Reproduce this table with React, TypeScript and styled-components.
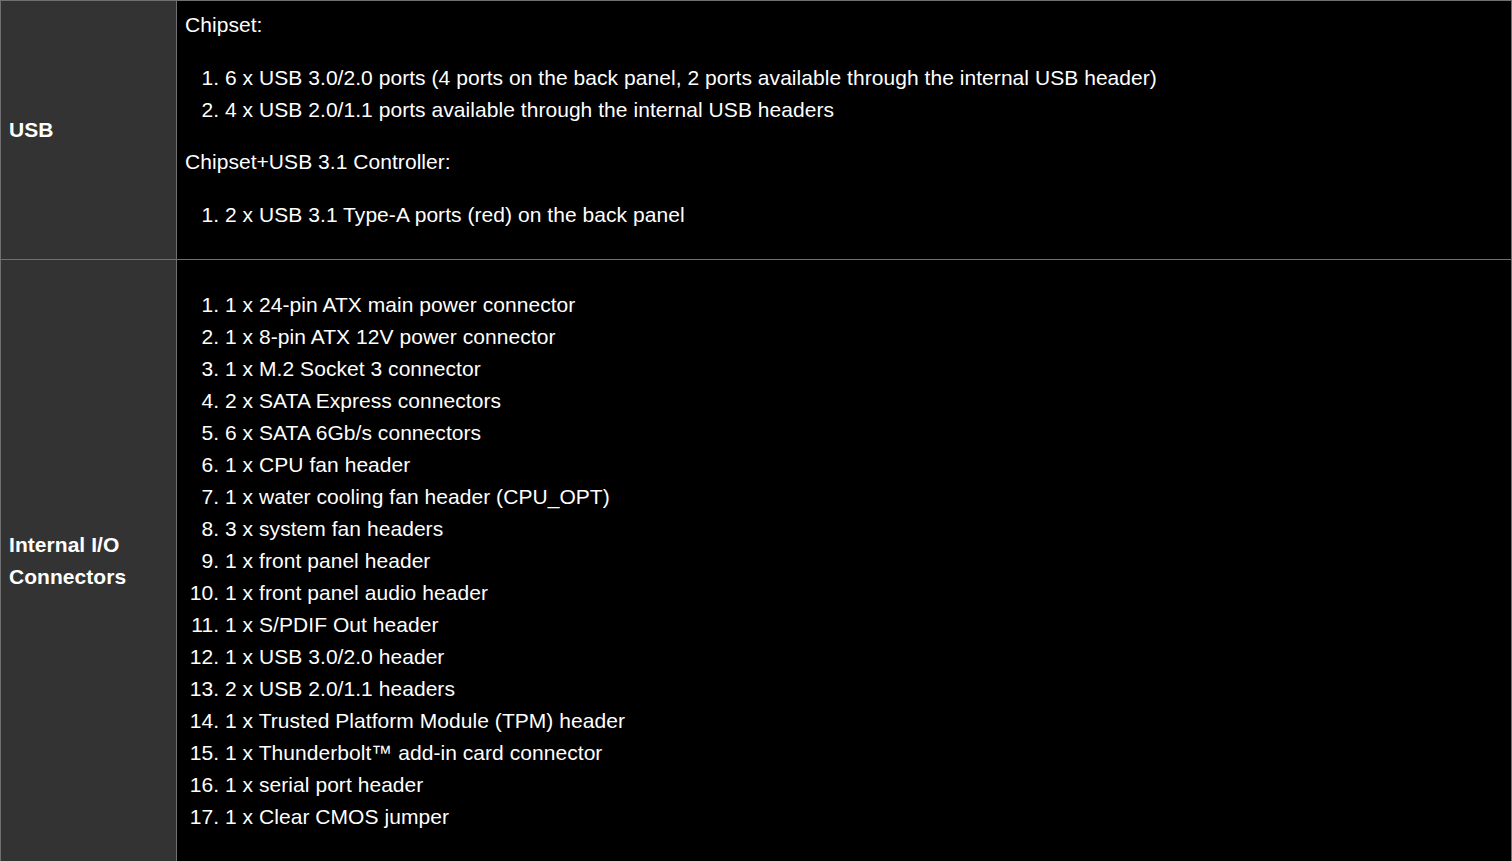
import React from "react";
import styled, { createGlobalStyle } from "styled-components";

const Global = createGlobalStyle`
  html, body { margin: 0; padding: 0; background: #000; }
  body { font-family: "Liberation Sans", Arial, sans-serif; color: #fff; }
`;

const Table = styled.table`
  width: 1512px;
  border-collapse: collapse;
  font-size: 21px;
  line-height: 32px;
  letter-spacing: 0.05px;
`;

const LabelCell = styled.th`
  width: 159px;
  background: #333;
  border: 1px solid #707070;
  padding: 0 8px;
  text-align: left;
  vertical-align: middle;
  font-weight: bold;
  color: #fff;
`;

const ContentCell = styled.td`
  background: #000;
  border: 1px solid #707070;
  padding: 8px 8px;
  vertical-align: top;
  color: #fff;
`;

const Para = styled.p`
  margin: 0;
`;

const List = styled.ol`
  margin: 21px 0 20px;
  padding-left: 40px;
`;

const rows = [
  {
    label: ["USB"],
    groups: [
      {
        title: "Chipset:",
        items: [
          "6 x USB 3.0/2.0 ports (4 ports on the back panel, 2 ports available through the internal USB header)",
          "4 x USB 2.0/1.1 ports available through the internal USB headers",
        ],
      },
      {
        title: "Chipset+USB 3.1 Controller:",
        items: ["2 x USB 3.1 Type-A ports (red) on the back panel"],
      },
    ],
  },
  {
    label: ["Internal I/O", "Connectors"],
    groups: [
      {
        title: "",
        items: [
          "1 x 24-pin ATX main power connector",
          "1 x 8-pin ATX 12V power connector",
          "1 x M.2 Socket 3 connector",
          "2 x SATA Express connectors",
          "6 x SATA 6Gb/s connectors",
          "1 x CPU fan header",
          "1 x water cooling fan header (CPU_OPT)",
          "3 x system fan headers",
          "1 x front panel header",
          "1 x front panel audio header",
          "1 x S/PDIF Out header",
          "1 x USB 3.0/2.0 header",
          "2 x USB 2.0/1.1 headers",
          "1 x Trusted Platform Module (TPM) header",
          "1 x Thunderbolt\u2122 add-in card connector",
          "1 x serial port header",
          "1 x Clear CMOS jumper",
        ],
      },
    ],
  },
];

export default function App() {
  return (
    <>
      <Global />
      <Table>
        <tbody>
          {rows.map((r, i) => (
            <tr key={i}>
              <LabelCell>
                {r.label.map((l, j) => (
                  <React.Fragment key={j}>
                    {j > 0 && <br />}
                    {l}
                  </React.Fragment>
                ))}
              </LabelCell>
              <ContentCell>
                {r.groups.map((g, k) => (
                  <React.Fragment key={k}>
                    {g.title && <Para>{g.title}</Para>}
                    <List>
                      {g.items.map((it, n) => (
                        <li key={n}>{it}</li>
                      ))}
                    </List>
                  </React.Fragment>
                ))}
              </ContentCell>
            </tr>
          ))}
        </tbody>
      </Table>
    </>
  );
}
